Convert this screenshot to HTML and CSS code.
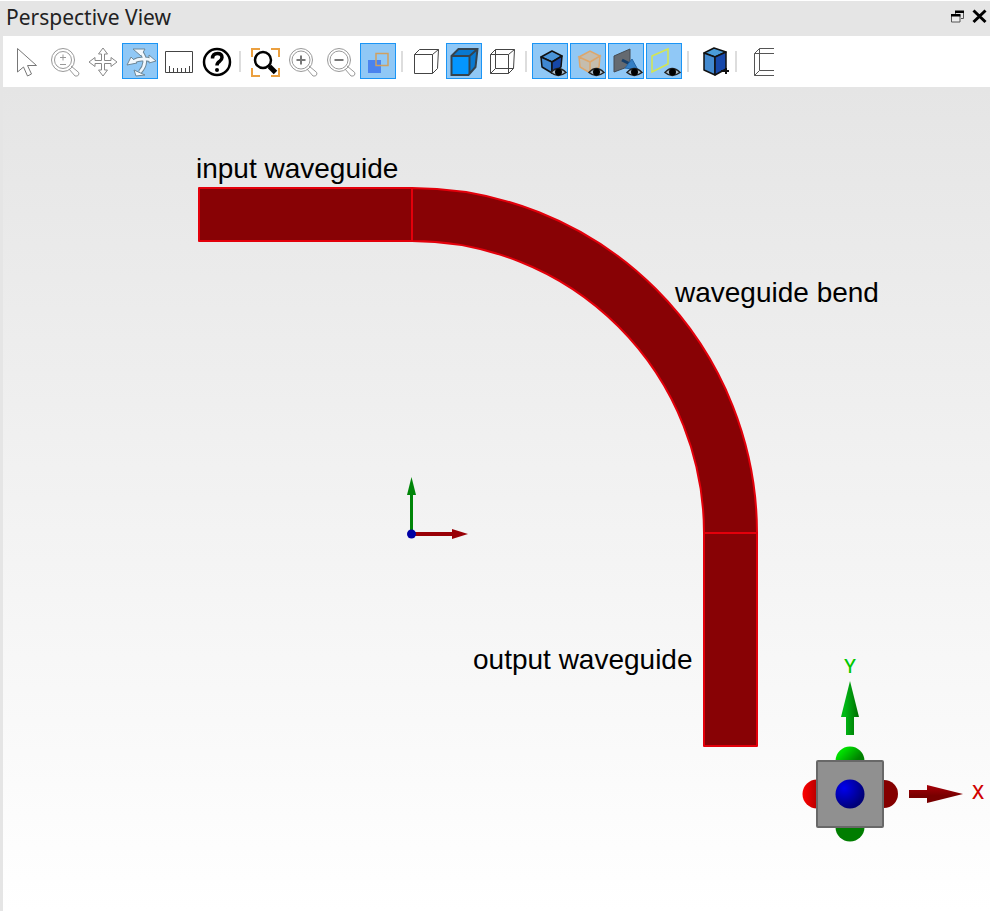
FILE: index.html
```html
<!DOCTYPE html>
<html lang="en">
<head>
<meta charset="utf-8">
<title>Perspective View</title>
<link rel="stylesheet" href="styles.css">
</head>
<body>
<main class="panel">
  <header class="titlebar">
    <h1 class="title">Perspective View</h1>
    <button class="win" type="button" aria-label="Float panel"><svg width="15" height="15" viewBox="0 0 15 15"><path d="M5.500 5V2.500h8V9.500H11" fill="none" stroke="#555"/><path d="M5 1.500h9v2.500H5z"/><path d="M1.500 6.500h8.500V13H1.500z" fill="#eee" stroke="#555"/><path d="M1 5h9.500v2.500H1z"/></svg></button>
    <button class="win" type="button" aria-label="Close panel"><svg width="15" height="15" viewBox="0 0 15 15"><path d="M1.500 1.500L13.500 13M13.500 1.500L1.500 13" stroke="#000" stroke-width="3"/></svg></button>
  </header>

  <div class="toolbar" role="toolbar" aria-label="View tools">
    <div class="group">
      <button class="tool" type="button" aria-label="Select"><svg viewBox="0 0 34 34"><path d="M7.500 3.500V27l6-5 4 9 4-2-4-8.500h9z" fill="#fff" stroke="#777"/></svg></button>
      <button class="tool" type="button" aria-label="Zoom"><svg viewBox="0 0 34 34"><g fill="none" stroke="#999"><circle cx="15" cy="15" r="11.500"/><circle cx="15" cy="15" r="8.500"/><path d="M21 24l6 7q3 1 4-2 0-2-2-3l-6-5M12 12.500h6M15 9.500v6M12 19.500h6"/></g></svg></button>
      <button class="tool" type="button" aria-label="Pan"><svg viewBox="0 0 34 34"><path d="M17 3l4.500 6h-3v6.500h6.500v-3l6 4.500-6 4.500v-3h-6.500v6.500h3l-4.500 6-4.500-6h3v-6.500H9v3l-6-4.500 6-4.500v3h6.500V9h-3z" fill="#fff" stroke="#888"/></svg></button>
      <button class="tool on" type="button" aria-label="Rotate" aria-pressed="true"><svg viewBox="0 0 34 34"><g fill="none"><path id="arcs" d="M8 17q9-5 19-2M17 7q8 10-1 20" stroke="#6d8798" stroke-width="4.500"/><path d="M9 4l12 0-4 7zM3 20l4-8 6 6zM32 16l-7-6v8zM10 25l11 5-9 1z" fill="#f2f8fd" stroke="#6d8798"/><path d="M8 17q9-5 19-2M17 7q8 10-1 20" stroke="#f2f8fd" stroke-width="2.500"/></g></svg></button>
      <button class="tool" type="button" aria-label="Ruler"><svg viewBox="0 0 34 34"><path d="M3.500 6.500h27v21h-27z" fill="#fff" stroke="#444"/><path d="M7.500 27v-6M11.500 27v-4M15.500 27v-4M19.500 27v-4M23.500 27v-4M27.500 27v-6" stroke="#444"/></svg></button>
      <button class="tool" type="button" aria-label="Help"><svg viewBox="0 0 34 34"><circle cx="17" cy="17" r="13" fill="none" stroke="#000" stroke-width="2.500"/><path d="M12.500 13.500q0-5 5-5 4.500 0 4.500 4 0 2-2.500 4-2.500 1.500-2.500 4" fill="none" stroke="#000" stroke-width="3.500"/><circle cx="17" cy="25" r="2"/></svg></button>
    </div>
    <div class="group">
      <button class="tool" type="button" aria-label="Zoom to extents"><svg viewBox="0 0 34 34"><path d="M4 12V4h8M23 4h8v8M31 23v8h-8M12 31H4v-8" fill="none" stroke="#eba040" stroke-width="2"/><circle cx="15" cy="15" r="8" fill="#fff" stroke="#000" stroke-width="2.500"/><path d="M20 20l3 3" stroke="#000" stroke-width="3"/><path d="M21.500 21.500l6 6" stroke="#000" stroke-width="5"/></svg></button>
      <button class="tool" type="button" aria-label="Zoom in"><svg viewBox="0 0 34 34"><g fill="none" stroke="#999"><circle cx="15" cy="15" r="11.500"/><circle cx="15" cy="15" r="9"/><path d="M21 24l6 7q3 1 4-2 0-2-2-3l-6-5"/><path d="M10.500 15h9M15 10.500v9" stroke="#777" stroke-width="2"/></g></svg></button>
      <button class="tool" type="button" aria-label="Zoom out"><svg viewBox="0 0 34 34"><g fill="none" stroke="#999"><circle cx="15" cy="15" r="11.500"/><circle cx="15" cy="15" r="9"/><path d="M21 24l6 7q3 1 4-2 0-2-2-3l-6-5"/><path d="M10.500 15h9" stroke="#777" stroke-width="2"/></g></svg></button>
      <button class="tool on" type="button" aria-label="Zoom region" aria-pressed="true"><svg viewBox="0 0 34 34"><path d="M6 15h13v13H6z" fill="#4b83ee"/><path d="M14 8.500h12v12h-12z" fill="none" stroke="#d0a060" stroke-width="1.500"/></svg></button>
    </div>
    <div class="group">
      <button class="tool" type="button" aria-label="Hidden line"><svg viewBox="0 0 34 34"><path d="M4.500 9.500l5-5h19l-1 19-5 5h-18zM4.500 9.500h18v19M22.500 9.500l6-5" fill="#fff" stroke="#444"/></svg></button>
      <button class="tool on" type="button" aria-label="Shaded" aria-pressed="true"><svg viewBox="0 0 34 34"><path d="M3.500 11l7-7h19l-2 18-7 8h-17z" fill="#0878d0"/><path d="M3.500 11h18v19h-18z" fill="#0496ff"/><path d="M3.500 11l7-7h19l-2 18-7 8h-17zM3.500 11h18v18M21.500 11l8-7" fill="none" stroke="#34434f" stroke-width="2"/></svg></button>
      <button class="tool" type="button" aria-label="Wireframe"><svg viewBox="0 0 34 34"><path d="M4.500 9.500l5-5h19l-1 19-5 5h-18zM4.500 9.500h18v19M22.500 9.500l6-5M9.500 4.500v19h18M9.500 23.500l-5 5" fill="none" stroke="#444"/></svg></button>
    </div>
    <div class="group">
      <button class="tool on" type="button" aria-label="Show structures" aria-pressed="true"><svg viewBox="0 0 34 34"><g stroke="#111" stroke-width="1.500" stroke-linejoin="round"><path d="M7 12l11-6 10 5-10 6z" fill="#4a94d8"/><path d="M7 12l11 5v11L8 22z" fill="#3f87d1"/><path d="M28 11l-10 6v11l9-6z" fill="#1647a8"/></g><use href="#eye"/></svg></button>
      <button class="tool on" type="button" aria-label="Show simulation region" aria-pressed="true"><svg viewBox="0 0 34 34"><path d="M7 12l11-6 10 5-10 6zM7 12l11 5v11L8 22zM28 11l-10 6v11l9-6z" fill="#c5bdae" stroke="#dda66b" stroke-width="1.500"/><use href="#eye"/></svg></button>
      <button class="tool on" type="button" aria-label="Show sources" aria-pressed="true"><svg viewBox="0 0 34 34"><path d="M4 11l16-7v17L4 27z" fill="#656a70" stroke="#444b52"/><path d="M12 15l8 4" stroke="#173f69" stroke-width="3"/><path d="M22 14l6 11-13-2z" fill="#347fc4" stroke="#2565a5"/><use href="#eye"/></svg></button>
      <button class="tool on" type="button" aria-label="Show monitors" aria-pressed="true"><svg viewBox="0 0 34 34"><path d="M4 11l16-7v15L4 27z" fill="none" stroke="#d5e64f" stroke-width="1.500"/><use href="#eye"/></svg></button>
    </div>
    <div class="group">
      <button class="tool" type="button" aria-label="Add structure"><svg viewBox="-2 0 34 34"><g stroke="#111" stroke-width="1.500" stroke-linejoin="round"><path d="M6 8l10-5 12 4-11 5z" fill="#4a9bd8"/><path d="M6 8l11 4v18L6 25z" fill="#438ad0"/><path d="M28 7l-11 5v18l11-6z" fill="#1748aa"/></g><path d="M23 26h8M28 23v6" stroke="#111" stroke-width="2"/></svg></button>
    </div>
    <div class="group">
      <button class="tool" type="button" aria-label="Clip view"><svg viewBox="-4 0 34 34"><path d="M26 3.500H11.500l-5 5v22H26M26 8.500H6.500M11.500 3.500v22H26M6.500 30.500l5-5" fill="none" stroke="#555"/></svg></button>
    </div>
  </div>

  <section class="viewport" aria-label="Model view">
    <svg class="scene" viewBox="0 0 987 824">
      <defs>
        <g id="eye"><path d="M17 27.500q7-8 15 0-8 6-15 0z" fill="#a8b9c7" stroke="#222" stroke-width="1.500"/><circle cx="24.500" cy="27" r="3.500"/></g>
        <linearGradient id="red"><stop offset="0" stop-color="#f00"/><stop offset="1" stop-color="#700000"/></linearGradient>
        <linearGradient id="green"><stop offset="0.200" stop-color="#00b916"/><stop offset="1" stop-color="#006d00"/></linearGradient>
        <linearGradient id="cone" x1="0" y1="0" x2="0" y2="1"><stop offset="0" stop-color="#a80008"/><stop offset="0.600" stop-color="#780000"/></linearGradient>
        <linearGradient id="ball" x1="0" y1="0" x2="1" y2="1"><stop offset="0.200" stop-color="#00df00"/><stop offset="0.600" stop-color="#008000"/></linearGradient>
        <radialGradient id="blue" cx=".3" cy=".3" r=".7"><stop offset="0" stop-color="#0000ee"/><stop offset="1" stop-color="#000078"/></radialGradient>
      </defs>
      <g class="guide">
        <path d="M196 101H409V154H196z"/>
        <path d="M409 101A345 345 0 0 1 754 446H701A292 292 0 0 0 409 154z"/>
        <path d="M701 446H754V659H701z"/>
      </g>
      <g class="label">
        <text x="193" y="91">input waveguide</text>
        <text x="672" y="215">waveguide bend</text>
        <text x="470" y="582">output waveguide</text>
      </g>
      <g>
        <path d="M407 446V408h-3l4.500-18 4.500 18h-3v38z" fill="#008508"/>
        <path d="M409 445h40v-3l16 5-16 5v-3h-40z" fill="#990006"/>
        <circle cx="408.500" cy="447" r="4.500" fill="#0000a5"/>
      </g>
      <g>
        <circle cx="814" cy="707" r="14.500" fill="url(#red)"/>
        <circle cx="881" cy="707" r="14" fill="#840000"/>
        <circle cx="847" cy="674" r="14.500" fill="url(#ball)"/>
        <circle cx="847" cy="740" r="14.500" fill="#007d00"/>
        <rect x="814" y="674" width="66" height="66" rx="1" fill="#909090" stroke="#686868" stroke-width="2"/>
        <circle cx="847" cy="707" r="14.500" fill="url(#blue)"/>
        <path d="M847 594l9 36h-5v18h-8v-18h-5z" fill="url(#green)"/>
        <path d="M906 703h18v-5l36 9-36 9v-5h-18z" fill="url(#cone)"/>
        <text class="axis y" x="847" y="586">Y</text>
        <text class="axis x" x="975" y="712">X</text>
      </g>
    </svg>
  </section>
</main>
</body>
</html>
```
FILE: styles.css
```css
* { box-sizing: border-box; }

body {
  margin: 0;
  background: #e5e5e5;
  font-family: "Noto Sans", sans-serif;
}

.panel {
  display: flex;
  flex-direction: column;
  min-height: 100vh;
  border-top: 1px solid #fff;
}

.titlebar {
  display: flex;
  align-items: center;
  height: 35px;
  padding: 0 0 4px 6px;
}

.title {
  flex: 1;
  margin: 0;
  color: #222;
  font: 21px/30px "Noto Sans", sans-serif;
}

button {
  padding: 0;
  border: 0;
  background: none;
}

.win {
  width: 22px;
  height: 16px;
}

.win svg { display: block; margin: auto; }

.toolbar {
  display: flex;
  height: 51px;
  margin-left: 3px;
  padding: 7px 5px;
  background: #fff;
}

.group {
  display: flex;
  gap: 2px;
}

.group + .group {
  margin-left: 5px;
  padding-left: 7px;
  background: linear-gradient(#ddd, #ddd) 0 8px / 2px 21px no-repeat;
}

.tool {
  width: 36px;
  height: 36px;
  padding: 1px 0 0 1px;
  border: 1px solid transparent;
}

.tool svg {
  display: block;
  width: 34px;
  height: 34px;
}

.tool.on {
  border-color: #1b95f5;
  background: #90c8f6;
}

.viewport {
  flex: 1;
  margin-left: 3px;
  background: linear-gradient(#e5e5e5, #fff);
}

.scene {
  display: block;
  width: 100%;
  height: auto;
}

.guide {
  fill: #880205;
  stroke: #e3000b;
  stroke-width: 2;
  stroke-linejoin: round;
}

.label {
  font: 28px "Liberation Sans", Arial, sans-serif;
}

.axis {
  font: 500 18px Inter, "Noto Sans", sans-serif;
  text-anchor: middle;
}

.axis.x { fill: #d00000; }
.axis.y { fill: #00c800; }
```
